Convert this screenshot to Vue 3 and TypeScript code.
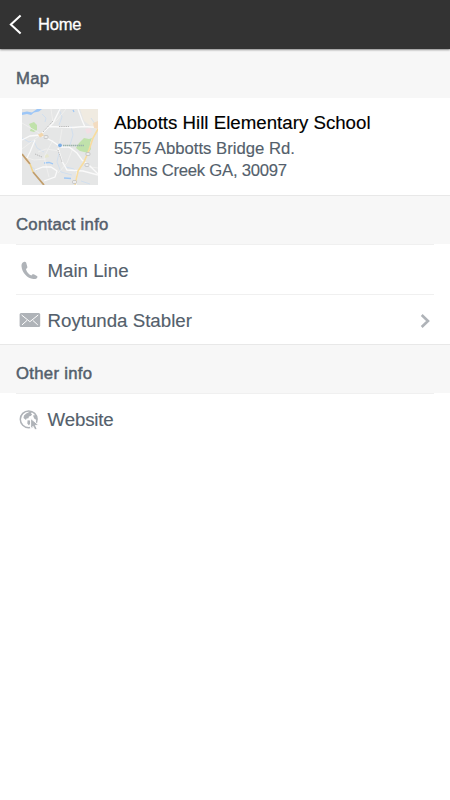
<script setup lang="ts">
interface Row {
  icon: 'phone' | 'mail' | 'web'
  label: string
  chevron?: boolean
}
interface Section {
  title: string
  rows: Row[]
}

const sections: Section[] = [
  {
    title: 'Contact info',
    rows: [
      { icon: 'phone', label: 'Main Line' },
      { icon: 'mail', label: 'Roytunda Stabler', chevron: true },
    ],
  },
  { title: 'Other info', rows: [{ icon: 'web', label: 'Website' }] },
]
</script>

<template>
  <main class="screen">
    <header class="bar">
      <svg class="back" viewBox="0 0 14 22" aria-hidden="true">
        <path d="M12.500 1.300 2 11l10.500 9.700" fill="none" stroke="#fff" stroke-width="2.200" />
      </svg>
      <span class="bar-title">Home</span>
    </header>

    <section>
      <h2 class="heading first">Map</h2>
      <div class="place">
        <svg class="map" viewBox="0 0 76 76" aria-hidden="true">
          <rect width="76" height="76" fill="#e5e6e6" />
          <path d="M58 0h18v22L62 12z" fill="#f0ebe1" />
          <path d="M0 3.500 5 2.500l5 1 5-3.500h5l-3 2.500-5 1-3 2.500-4-1-5 1z" fill="#9cc6f7" />
          <path d="M7 15l5-2 3 3v5l-3 2-4-1 1-3zM57 34l5-5 5 1 3-1-2 5 1 6-3 4-8-2-4-3z" fill="#c0e2ab" />
          <path d="M63 20l5-1 2 4-5 2z" fill="#f2dfe4" />
          <path d="M2 51l4-3 2 6-3 1z" fill="#f1e4d4" />
          <path d="M23 46l3-1 1 3-4 1z" fill="#e6e7cf" />
          <g fill="none" stroke="#c8dbf0" stroke-width=".7">
            <path d="M0 29l7 4 5-1 3 7 7 4M37 0l3 8-3 8M37 44l-2 9 4 10 11 3M49 17l2 9-3 10M59 72l9 3M69 9l4 6" />
            <path d="M20 5l4 4-1 4M44 58l8 2 4 5M10 58l5 4" />
          </g>
          <path d="M22 54l5-.500 4 1.300M42 69l7 .500M51 1l1 2" fill="none" stroke="#9fc8f5" stroke-width="1.300" />
          <g fill="none" stroke="#f1f1f0" stroke-width=".8">
            <path d="M0 14l19 11M0 40l17-13M26 17l9-6 9-11M29 0l2 14M16 43l8-3 14 2M0 47l12 4 12-1M40 20l-3 18M51 39l-6 15-9 10M60 54l8 4 8 1M31 31l-9 17 5 20" />
          </g>
          <g fill="none" stroke="#fafafa" stroke-width="1.300">
            <path d="M0 31l8-4 10-1 13-12 7-14M18 26l12 6 9 6h8l8 6 5 7 8 6 8 8M27 17.500l24 1 11-1 14 1M56 0l4 11 3 7" />
            <path d="M13 31l-5 12-3 6M36 39l4 13 5 9 16 1 15 4M13 61l8-3 8 0 6 4-2 6-11 4M54 76l1-13" />
          </g>
          <path d="M76 20l-5 9-4 12-5 12-6 9-3 14" fill="none" stroke="#f8dc9d" stroke-width="1.600" />
          <path d="M71 14l5-2v8l-4-1z" fill="#f3dcc0" />
          <path d="M0 45l8 10M11 63l11 13" fill="none" stroke="#c19e6c" stroke-width="1.800" />
          <path d="M8 55l3 8" fill="none" stroke="#efd38d" stroke-width="1.600" />
          <path d="M16 25.500l4-2 2 3-4 2z" fill="#f1d6ae" />
          <g fill="none" stroke="#a3a3a3" stroke-width=".7" stroke-dasharray="1.400 .8">
            <path d="M21 23l10-11M37 17.500h10M13 45l7 3M36 41l4 12" />
          </g>
          <g fill="#ededed" stroke="#b4b4b4" stroke-width=".6">
            <rect x="22" y="26.500" width="4" height="3" rx="1" />
            <rect x="64" y="43.500" width="4" height="3" rx="1" />
            <rect x="63" y="54.500" width="4" height="3" rx="1" />
            <rect x="50.500" y="71.500" width="4" height="3" rx="1" />
          </g>
          <circle cx="38" cy="36.300" r="1.900" fill="#7daee4" />
          <path d="M41 36.500h21" stroke="#9cb4ac" stroke-width="1.400" stroke-dasharray="1.500 .5" />
        </svg>
        <div class="details">
          <div class="name">Abbotts Hill Elementary School</div>
          <div class="line">5575 Abbotts Bridge Rd.</div>
          <div class="line city">Johns Creek GA, 30097</div>
        </div>
      </div>
    </section>

    <section v-for="section in sections" :key="section.title">
      <h2 class="heading">{{ section.title }}</h2>
      <ul class="rows">
        <li v-for="row in section.rows" :key="row.label" class="row">
          <svg class="icon" viewBox="0 0 24 24" aria-hidden="true">
            <path
              v-if="row.icon === 'phone'"
              d="M5.800 3C4.300 3.500 3.300 5 3.500 7.300 4.100 13.800 9.300 19.400 15.400 20c2 .2 3.300-.5 3.900-1.600.3-.6.1-1.100-.4-1.400l-3.100-1.700c-.6-.3-1.200-.2-1.600.3l-.8 1c-2.700-1.300-4.700-3.700-5.500-6.700l1-.7c.5-.4.6-.9.4-1.500L8.200 3.700C7.800 2.900 6.800 2.600 5.800 3z"
              fill="#afb3b8"
            />
            <template v-else-if="row.icon === 'mail'">
              <rect x="1.600" y="4" width="20.600" height="14" rx="1.500" fill="#afb3b8" />
              <path d="M3.600 6l8.300 6.700L20.200 6M4 15.900l5-4.500M19.800 15.900l-5-4.500" fill="none" stroke="#fff" stroke-width="1" />
            </template>
            <template v-else>
              <circle cx="10.700" cy="11.300" r="8.400" fill="none" stroke="#afb3b8" stroke-width="1.500" />
              <path d="M8.200 5.500l3.500-1.800 2.300.6-1 1.400 1.200.8-1.500 1.600-1.800.5-.4 1.700-2 .3-.5 1.300-2.500-1.800.5-2.600zM9.600 12.300l2.500.2.500 2.300-1.600 2.600-1.700-2zM15 7.500l2.700-.5 1.500 3.300-.4 2-2.600-1.900z" fill="#afb3b8" />
              <path d="M12.600 10.300v10.300l2.600-2.200 1.600 3.600 2.400-1-1.700-3.600h3.500z" fill="#afb3b8" stroke="#fff" stroke-width="1" />
            </template>
          </svg>
          <span class="label" :class="{ tight: row.icon === 'web' }">{{ row.label }}</span>
          <svg v-if="row.chevron" class="chevron" viewBox="0 0 10 14" aria-hidden="true">
            <path d="M1.700 1 8 7l-6.300 6" fill="none" stroke="#afb3b8" stroke-width="2.600" />
          </svg>
        </li>
      </ul>
    </section>
  </main>
</template>

<style>
body {
  margin: 0;
  background: #fff;
}
</style>

<style scoped>
.screen {
  width: 100%;
  min-height: 800px;
  background: #fff;
  color: #545f6c;
  font-family: "Liberation Sans", Arial, sans-serif;
}
.bar {
  position: relative;
  display: flex;
  align-items: center;
  box-sizing: border-box;
  height: 49px;
  padding-left: 9px;
  background: #333;
  box-shadow: 0 1px 2px rgba(0, 0, 0, 0.4);
  color: #fff;
}
.back {
  width: 13px;
  height: 21px;
}
.bar-title {
  margin-left: 16px;
  font-size: 16.5px;
  letter-spacing: -0.2px;
  -webkit-text-stroke: 0.3px currentColor;
}
.heading {
  box-sizing: border-box;
  height: 49px;
  margin: 0;
  padding: 19px 16px 0;
  border-top: 1px solid #e8e8e8;
  background: #f7f7f7;
  font-size: 16.7px;
  font-weight: 400;
  line-height: 20px;
  letter-spacing: 0.3px;
  -webkit-text-stroke: 0.5px currentColor;
}
.place {
  display: flex;
  box-sizing: border-box;
  height: 97px;
  padding: 11px 16px 0 22px;
}
.map {
  flex: none;
  width: 76px;
  height: 76px;
}
.details {
  padding: 2px 0 0 16px;
  white-space: nowrap;
}
.name {
  height: 27px;
  color: #000;
  font-size: 18.7px;
  line-height: 23px;
  -webkit-text-stroke: 0.15px currentColor;
}
.line {
  font-size: 16.7px;
  line-height: 22px;
  -webkit-text-stroke: 0.15px currentColor;
}
.city {
  letter-spacing: -0.25px;
}
.rows {
  margin: 0;
  padding: 0 16px;
  list-style: none;
}
.row {
  display: flex;
  align-items: center;
  box-sizing: border-box;
  height: 50px;
  padding: 2px 4px 0 2px;
  border-top: 1px solid #f0f0f0;
}
.icon {
  flex: none;
  width: 24px;
  height: 24px;
}
.label {
  flex: 1;
  margin-left: 5.5px;
  font-size: 18.7px;
  -webkit-text-stroke: 0.15px currentColor;
}
.label.tight {
  letter-spacing: -0.15px;
}
.chevron {
  width: 10px;
  height: 14px;
}
</style>
